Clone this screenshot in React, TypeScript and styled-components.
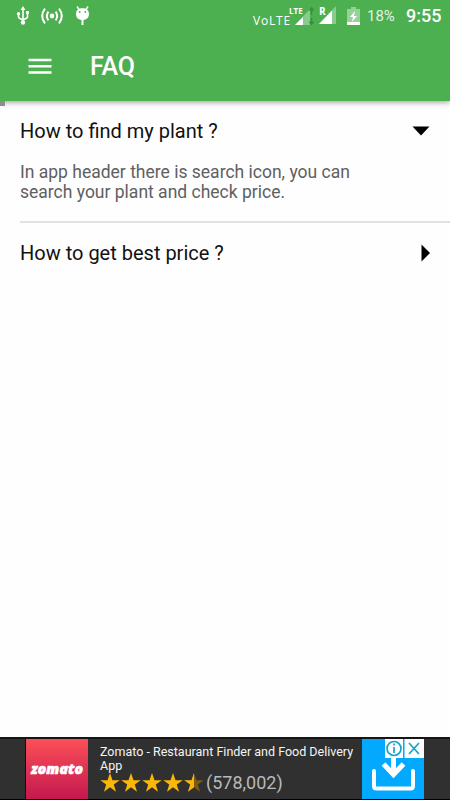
import React, { useState } from "react";
import styled, { createGlobalStyle } from "styled-components";

const GlobalStyle = createGlobalStyle`
  * { box-sizing: border-box; }
  body { margin: 0; background: #fff; font-family: Roboto, sans-serif; }
  svg { display: block; flex: none; }
`;

const Screen = styled.div`
  display: flex;
  flex-direction: column;
  width: 450px;
  height: 800px;
  overflow: hidden;
  background: #fefefe;
`;

const Header = styled.header`
  flex: none;
  height: 101px;
  background: #4caf50;
  color: #fff;
  box-shadow: 0 1px 6px rgba(0, 0, 0, 0.42);
`;

const StatusBar = styled.div`
  display: flex;
  align-items: center;
  height: 32px;
  padding: 0 9px 0 16px;
`;

const Notifications = styled.div`
  display: flex;
  align-items: center;
  gap: 11px;
  margin-right: auto;
`;

const Network = styled.span`
  margin: 10px 0 0 0;
  font: 12px/14px "Open Sans", sans-serif;
  letter-spacing: 0.8px;
  width: 38px;
  white-space: nowrap;
`;

const Signal = styled.div<{ $gap: number }>`
  position: relative;
  margin-right: ${(p) => p.$gap}px;
`;

const SignalLabel = styled.span<{ $left: number; $size: number }>`
  position: absolute;
  left: ${(p) => p.$left}px;
  top: 0;
  font: 700 ${(p) => p.$size}px/10px "Open Sans", sans-serif;
`;

const Battery = styled.span`
  width: 39px;
  margin-left: 7px;
  font-size: 15px;
  line-height: 20px;
  color: #e4f3e5;
`;

const Clock = styled.span`
  width: 35px;
  font-size: 18px;
  line-height: 22px;
  font-weight: 500;
  white-space: nowrap;
`;

const Toolbar = styled.div`
  display: flex;
  align-items: center;
  height: 69px;
  padding-left: 28px;
  gap: 38px;
`;

const MenuButton = styled.button`
  padding: 0;
  border: 0;
  background: none;
  color: #fff;
`;

const Title = styled.h1`
  margin: 0;
  font-size: 25px;
  line-height: 30px;
  font-weight: 500;
  letter-spacing: -0.1px;
`;

const ScrollMark = styled.div`
  position: absolute;
  left: 0;
  top: 101px;
  width: 5px;
  height: 5px;
  background: #8e8e8e;
`;

const FaqList = styled.main`
  flex: 1;
  padding-left: 20px;
`;

const FaqItem = styled.section`
  padding: 17px 20px 19px 0;
  border-bottom: 2px solid #e1e1e1;
  &:last-child { border: 0; }
`;

const Question = styled.button`
  display: flex;
  align-items: center;
  justify-content: space-between;
  width: 100%;
  height: 26px;
  padding: 0;
  border: 0;
  background: none;
  color: #111;
  font: 20px/26px Roboto, sans-serif;
`;

const Answer = styled.p`
  margin: 18px 0 0;
  width: 350px;
  color: #606060;
  font-size: 17.5px;
  line-height: 20px;
`;

const AdBanner = styled.footer`
  display: flex;
  flex: none;
  height: 63px;
  padding-left: 25px;
  background: #303030;
  border-top: 2px solid #151515;
  border-bottom: 1px solid #000;
`;

const Brand = styled.div`
  display: flex;
  align-items: center;
  justify-content: center;
  width: 63px;
  border-left: 1px solid #111;
  background: linear-gradient(#fb4f58, #c5184f);
  color: #fff;
  font: italic 800 14px/18px "Open Sans", sans-serif;
  letter-spacing: 0.1px;
  -webkit-text-stroke: 0.6px #fff;
`;

const AdCopy = styled.div`
  width: 274px;
  padding: 6px 0 0 12px;
  color: #f5f5f5;
  font-size: 12.5px;
  line-height: 14px;
`;

const Rating = styled.div`
  display: flex;
  align-items: center;
  height: 19px;
  color: #b9b9b9;
  font-size: 18px;
`;

const Stars = styled.div`
  display: flex;
  gap: 1px;
  margin-right: 2px;
`;

const Install = styled.div`
  width: 62px;
  background: #03a9ff;
`;

const UsbIcon = () => (
  <svg width="14" height="20" viewBox="0 0 14 20" fill="none" stroke="#fff" strokeWidth="1.6">
    <path d="M7 4v12M2.500 8v3q0 1 1 1.300L7 14l3.800-2q.7-.4.7-1.300V7" />
    <path d="M7 0l2.500 4h-5zM10 5h3v3h-3z" fill="#fff" stroke="none" />
    <circle cx="2.500" cy="7.700" r="1.700" fill="#fff" stroke="none" />
    <circle cx="7" cy="16.500" r="2.200" fill="#fff" stroke="none" />
  </svg>
);

const BroadcastIcon = () => (
  <svg width="22" height="18" viewBox="0 0 22 18" fill="none" stroke="#fff" strokeWidth="2">
    <circle cx="11" cy="9" r="2.400" fill="#fff" stroke="none" />
    <path d="M7.400 4.600Q4.200 9 7.400 13.400M14.600 4.600Q17.800 9 14.600 13.400M4 1.700Q-1.600 9 4 16.300M18 1.700Q23.600 9 18 16.300" />
  </svg>
);

const BugIcon = () => (
  <svg width="16" height="20" viewBox="0 0 16 20">
    <path d="M3 .5l2 3M14 .5l-2 3" stroke="#fff" strokeWidth="1.500" />
    <path d="M8.500 14v5" stroke="#fff" strokeWidth="2" />
    <path d="M8.500 2.300c4 0 6.500 2 6.500 5.700s-2.500 6-6.500 6S2 11.700 2 8s2.500-5.700 6.500-5.700z" fill="#fff" />
    <circle cx="5.700" cy="6" r=".9" fill="#4caf50" />
    <circle cx="11.300" cy="6" r=".9" fill="#4caf50" />
  </svg>
);

const LteSignal = () => (
  <svg width="24" height="20" viewBox="0 0 24 20">
    <path d="M4 19L19 3v16z" fill="#8acb8d" />
    <path d="M4 19l8-8v8z" fill="#fff" />
    <path d="M20.500 2v7M20.500 12v6M18.500 4.500l2-2.500 2 2.500M18.500 15.800l2 2.500 2-2.500" fill="none" stroke="#388e3c" strokeWidth="1.500" />
  </svg>
);

const RoamingSignal = () => (
  <svg width="19" height="20" viewBox="0 0 19 20">
    <path d="M1 18L18 0v18z" fill="#8acb8d" />
    <path d="M1 18L14 4.500V18z" fill="#fff" />
  </svg>
);

const BatteryIcon = () => (
  <svg width="13" height="18" viewBox="0 0 13 18">
    <path d="M4 0h5v2h4v16H0V2h4z" fill="#98d09a" />
    <path d="M0 15h13v3H0zM8 4L3 10h3l-1 5 5-6H7z" fill="#fff" />
  </svg>
);

const MenuIcon = () => (
  <svg width="24" height="17" viewBox="0 0 24 17">
    <path d="M.5 2H23.500M.5 8.300H23.500M.5 14.600H23.500" stroke="#fff" strokeWidth="2.500" />
  </svg>
);

const Chevron = ({ open }: { open: boolean }) =>
  open ? (
    <svg width="18" height="10" viewBox="0 0 18 10"><path d="M.5.5h17L9 9.500z" /></svg>
  ) : (
    <svg width="9" height="18" viewBox="0 0 9 18"><path d="M.5.5v17L9 9z" /></svg>
  );

const starPath = "M10 0l2.500 7.200h7.200l-5.900 4.400 2.200 7.200-6-4.500-6 4.500 2.200-7.200L.3 7.200h7.200z";

const Star = ({ half }: { half?: boolean }) => (
  <svg width="20" height="19" viewBox="0 0 20 19">
    <path d={starPath} fill={half ? "#775b16" : "#fab707"} />
    {half && <path d="M10 0v14.300l-6 4.500 2.200-7.200L.3 7.200h7.200z" fill="#fab707" />}
  </svg>
);

const InstallIcon = () => (
  <svg width="62" height="60" viewBox="0 0 62 60" fill="none">
    <path d="M31.500 15v20M21.500 25l10 10.500L41.500 25" stroke="#fff" strokeWidth="5" />
    <path d="M12 32v15q0 2.500 2.500 2.500h34q2.500 0 2.500-2.500V32" stroke="#fff" strokeWidth="4" strokeLinecap="round" />
    <path d="M23 0h18v19H23zM42.500 0H62v19H42.500z" fill="#fff" />
    <g stroke="#12a5c6" strokeWidth="1.700">
      <circle cx="32" cy="9.500" r="7" />
      <path d="M32 8v6M32 4.500v2M47 4l10 11M57 4L47 15" />
    </g>
  </svg>
);

const faqs = [
  {
    question: "How to find my plant ?",
    answer: "In app header there is search icon, you can search your plant and check price.",
  },
  { question: "How to get best price ?", answer: "" },
];

export default function App() {
  const [openIndex, setOpenIndex] = useState(0);
  return (
    <Screen>
      <GlobalStyle />
      <Header>
        <StatusBar>
          <Notifications><UsbIcon /><BroadcastIcon /><BugIcon /></Notifications>
          <Network>VoLTE</Network>
          <Signal $gap={3}><SignalLabel $left={-2} $size={8}>LTE</SignalLabel><LteSignal /></Signal>
          <Signal $gap={10}><SignalLabel $left={1} $size={10}>R</SignalLabel><RoamingSignal /></Signal>
          <BatteryIcon />
          <Battery>18%</Battery>
          <Clock>9:55</Clock>
        </StatusBar>
        <Toolbar>
          <MenuButton aria-label="Menu"><MenuIcon /></MenuButton>
          <Title>FAQ</Title>
        </Toolbar>
      </Header>
      <ScrollMark />
      <FaqList>
        {faqs.map((faq, i) => (
          <FaqItem key={faq.question}>
            <Question onClick={() => setOpenIndex(i)}>
              {faq.question}
              <Chevron open={openIndex === i} />
            </Question>
            {openIndex === i && <Answer>{faq.answer}</Answer>}
          </FaqItem>
        ))}
      </FaqList>
      <AdBanner>
        <Brand>zomato</Brand>
        <AdCopy>
          Zomato - Restaurant Finder and Food Delivery App
          <Rating>
            <Stars><Star /><Star /><Star /><Star /><Star half /></Stars>
            (578,002)
          </Rating>
        </AdCopy>
        <Install><InstallIcon /></Install>
      </AdBanner>
    </Screen>
  );
}
